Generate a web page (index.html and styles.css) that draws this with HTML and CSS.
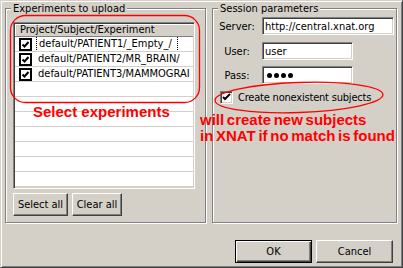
FILE: index.html
```html
<!DOCTYPE html>
<html lang="en">
<head>
<meta charset="UTF-8">
<title>Upload experiments</title>
<link rel="stylesheet" href="styles.css">
</head>
<body>

<div class="dialog">
    <div class="groups">
        <div class="group group-left">
            <span class="group-title">Experiments to upload</span>
            <div class="table-pane">
                <div class="table-head">Project/Subject/Experiment</div>
                <div class="table-row">
                    <span class="cell-check"><svg class="tick" width="13" height="13" viewBox="0 0 13 13"><rect x="1" y="1" width="11" height="11" fill="#fff" stroke="#000" stroke-width="2"/><path d="M3.5 6.5l2 2 4-4.5" fill="none" stroke="#000" stroke-width="2"/></svg></span>
                    <span class="cell-name"><span class="focus">default/PATIENT1/_Empty_/</span></span>
                </div>
                <div class="table-row">
                    <span class="cell-check"><svg class="tick" width="13" height="13" viewBox="0 0 13 13"><rect x="1" y="1" width="11" height="11" fill="#fff" stroke="#000" stroke-width="2"/><path d="M3.5 6.5l2 2 4-4.5" fill="none" stroke="#000" stroke-width="2"/></svg></span>
                    <span class="cell-name">default/PATIENT2/MR_BRAIN/</span>
                </div>
                <div class="table-row">
                    <span class="cell-check"><svg class="tick" width="13" height="13" viewBox="0 0 13 13"><rect x="1" y="1" width="11" height="11" fill="#fff" stroke="#000" stroke-width="2"/><path d="M3.5 6.5l2 2 4-4.5" fill="none" stroke="#000" stroke-width="2"/></svg></span>
                    <span class="cell-name">default/PATIENT3/MAMMOGRAI</span>
                </div>
                <div class="table-row"></div>
                <div class="table-row"></div>
                <div class="table-row"></div>
                <div class="table-row"></div>
                <div class="table-row"></div>
                <div class="table-row"></div>
                <div class="table-row"></div>
            </div>
            <div class="button-row">
                <button class="btn btn-select">Select all</button>
                <button class="btn btn-clear">Clear all</button>
            </div>
        </div>

        <div class="group group-right">
            <span class="group-title">Session parameters</span>
            <div class="form-row">
                <label class="form-label">Server:</label>
                <span class="field field-wide">http://central.xnat.org</span>
            </div>
            <div class="form-row">
                <label class="form-label">User:</label>
                <span class="field">user</span>
            </div>
            <div class="form-row form-row-pass">
                <label class="form-label">Pass:</label>
                <span class="field"><i class="dot"></i><i class="dot"></i><i class="dot"></i><i class="dot"></i></span>
            </div>
            <div class="check-row">
                <span class="check-box"><svg width="9" height="9" viewBox="0 0 9 9"><path d="M1 4l2 2 5-5" fill="none" stroke="#000" stroke-width="2"/></svg></span>
                <span class="check-label">Create nonexistent subjects</span>
            </div>
        </div>
    </div>

    <div class="dialog-buttons">
        <button class="btn btn-main btn-default">OK</button>
        <button class="btn btn-main">Cancel</button>
    </div>

    <!-- red annotations drawn over the dialog -->
    <svg class="marks" width="403" height="268" viewBox="0 0 403 268">
        <rect x="10.5" y="15.5" width="189" height="87" rx="15" fill="none" stroke="#f00" stroke-width="1.3"/>
        <ellipse cx="299" cy="97.5" rx="84" ry="15" fill="none" stroke="#f00" stroke-width="1.3" transform="rotate(-2 299 97.5)"/>
    </svg>
    <div class="note note-select">Select experiments</div>
    <div class="note note-create">will create new subjects<br>in XNAT if no match is found</div>
</div>

</body>
</html>
```

FILE: styles.css
```css
body {
    margin: 0;
    padding: 0;
    background-color: #d4d0c8;
    font-family: "DejaVu Sans Condensed", "Liberation Sans", Arial, sans-serif;
    font-size: 11px;
    color: #000;
}
.dialog {
    position: relative;
    width: 403px;
    height: 268px;
    box-sizing: border-box;
    border: 1px solid;
    border-color: #d4d0c8 #404040 #404040 #d4d0c8;
    box-shadow: inset 1px 1px 0 #fff, inset -1px -1px 0 #808080;
    background-color: #d4d0c8;
}
.groups {
    display: flex;
    gap: 6px;
    height: 215px;
    margin-top: 7px;
    padding-left: 4px;
}
.group {
    display: flex;
    flex-direction: column;
    align-items: flex-start;
    box-sizing: border-box;
    border: 1px solid #808080;
    box-shadow: inset 1px 1px 0 #fff, 1px 1px 0 #fff;
}
.group-left {
    width: 201px;
}
.group-right {
    width: 185px;
}
.group-title {
    margin: -7px 0 0 5px;
    padding: 0 2px;
    line-height: 13px;
    background-color: #d4d0c8;
}

/* table */
.table-pane {
    width: 182px;
    margin: 7px 0 0 7px;
    box-sizing: border-box;
    border: 1px solid;
    border-color: #808080 #fff #fff #808080;
    box-shadow: inset 1px 1px 0 #404040, inset -1px -1px 0 #d4d0c8;
    padding: 1px;
    background-color: #fff;
    overflow: hidden;
}
.table-head {
    height: 13px;
    box-sizing: border-box;
    padding-left: 5px;
    line-height: 12px;
    background-color: #d4d0c8;
    border-bottom: 1px solid #808080;
    box-shadow: inset 1px 1px 0 #fff;
}
.table-row {
    display: flex;
    height: 15px;
    box-sizing: border-box;
    border-bottom: 1px solid #d4d0c8;
    line-height: 14px;
    white-space: nowrap;
}
.cell-check {
    display: flex;
    justify-content: center;
    align-items: center;
    flex: 0 0 21px;
}
.cell-name {
    flex: 1;
    overflow: hidden;
}
.cell-name,
.focus {
    padding-left: 2px;
}
.focus {
    display: inline-block;
    margin-left: -2px;
    padding-right: 5px;
    height: 13px;
    line-height: 13px;
    border-left: 1px dotted #000;
    border-right: 1px dotted #000;
}
.tick {
    display: block;
}

/* buttons */
.btn {
    font-family: inherit;
    font-size: 11px;
    color: #000;
    padding: 0;
    height: 23px;
    box-sizing: border-box;
    background-color: #d4d0c8;
    border: 1px solid;
    border-color: #fff #404040 #404040 #fff;
    box-shadow: inset -1px -1px 0 #808080;
}
.button-row {
    display: flex;
    gap: 4px;
    margin: 4px 0 0 7px;
}
.btn-select {
    width: 55px;
}
.btn-clear {
    width: 50px;
}
.dialog-buttons {
    display: flex;
    justify-content: flex-end;
    gap: 4px;
    margin-top: 17px;
    padding-right: 9px;
}
.btn-main {
    width: 77px;
}
.btn-default {
    border-color: #000;
    box-shadow: inset 1px 1px 0 #fff, inset -1px -1px 0 #404040, inset -2px -2px 0 #808080;
}

/* session form */
.form-row {
    display: flex;
    align-items: center;
    margin-top: 2px;
}
.form-row + .form-row {
    margin-top: 7px;
}
.form-row-pass {
    margin-top: 6px !important;
}
.form-label {
    width: 42px;
    margin-left: 3px;
    margin-right: 4px;
    text-align: center;
}
.field {
    display: flex;
    align-items: center;
    gap: 2px;
    width: 91px;
    height: 18px;
    box-sizing: border-box;
    padding: 1px 2px 0;
    border: 1px solid;
    border-color: #808080 #fff #fff #808080;
    box-shadow: inset 1px 1px 0 #404040, inset -1px -1px 0 #d4d0c8;
    background-color: #fff;
    line-height: 13px;
}
.field-wide {
    width: 132px;
}
.dot {
    display: block;
    width: 5px;
    height: 5px;
    border-radius: 50%;
    background-color: #000;
}
.dot:first-child {
    margin-left: 2px;
}
.check-row {
    display: flex;
    align-items: center;
    gap: 5px;
    margin: 7px 0 0 7px;
    line-height: 13px;
}
.check-label {
    letter-spacing: -0.2px;
}
.check-box {
    display: flex;
    justify-content: center;
    align-items: center;
    width: 13px;
    height: 13px;
    box-sizing: border-box;
    border: 1px solid;
    border-color: #808080 #fff #fff #808080;
    box-shadow: inset 1px 1px 0 #404040, inset -1px -1px 0 #d4d0c8;
    background-color: #fff;
}

/* annotations */
.marks {
    position: absolute;
    left: -1px;
    top: -1px;
    pointer-events: none;
}
.note {
    position: absolute;
    color: #f00;
    font-family: "Liberation Sans", Arial, sans-serif;
    font-weight: bold;
    font-size: 15px;
    line-height: 16px;
    white-space: nowrap;
}
.note-select {
    left: 32px;
    top: 103px;
}
.note-create {
    left: 199px;
    top: 111px;
    word-spacing: -1.5px;
}
```
